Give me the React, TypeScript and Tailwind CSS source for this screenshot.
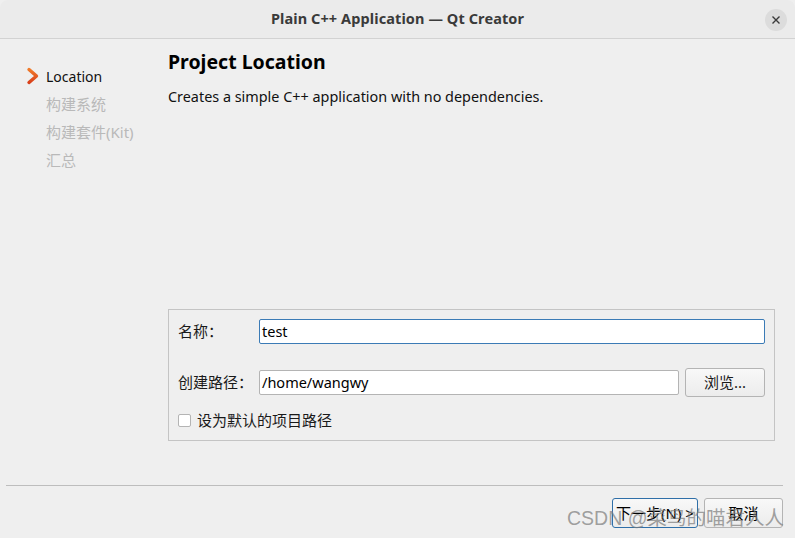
import React from "react";

const F = { fontFamily: '"Noto Sans", "Noto Sans CJK SC", sans-serif' };

export default function App() {
  return (
    <div
      className="relative w-[795px] h-[538px] overflow-hidden bg-[#efefef] flex flex-col text-[#1a1a1a]"
      style={F}
    >
      {/* Title bar */}
      <div className="h-[39px] shrink-0 bg-[#ebebeb] border-b border-[#d2d2d2] rounded-t-[8px] flex items-center justify-center relative">
        <span className="text-[14.5px] font-bold text-[#3a3a3a] tracking-[0.1px] pl-[-4px]">
          Plain C++ Application — Qt Creator
        </span>
        <div className="absolute right-[8px] top-[9px] w-[22px] h-[22px] rounded-full bg-[#dcdcdc] flex items-center justify-center">
          <svg width="10" height="10" viewBox="0 0 10 10">
            <path d="M1.5 1.5 L8.5 8.5 M8.5 1.5 L1.5 8.5" stroke="#3a3a3a" strokeWidth="1.4" />
          </svg>
        </div>
      </div>

      {/* Body */}
      <div className="flex flex-1">
        {/* Sidebar */}
        <div className="w-[168px] shrink-0 pt-[27px] flex flex-col">
          <div className="flex items-center h-[20px]">
            <svg width="46" height="20" viewBox="0 0 46 20" className="shrink-0">
              <defs>
                <linearGradient id="chev" x1="0" y1="0" x2="0" y2="1">
                  <stop offset="0" stopColor="#f07a2a" />
                  <stop offset="1" stopColor="#d9401a" />
                </linearGradient>
              </defs>
              <path d="M29 3.5 L36.5 10 L29 16.5" stroke="url(#chev)" strokeWidth="3.4" fill="none" strokeLinejoin="round" strokeLinecap="round" />
            </svg>
            <span className="text-[14px] text-[#111]">Location</span>
          </div>
          <div className="pl-[46px] mt-[8px] h-[20px] text-[15px] text-[#b9b9b9] leading-[20px]">构建系统</div>
          <div className="pl-[46px] mt-[8px] h-[20px] text-[15px] text-[#b9b9b9] leading-[20px]">构建套件(Kit)</div>
          <div className="pl-[46px] mt-[8px] h-[20px] text-[15px] text-[#b9b9b9] leading-[20px]">汇总</div>
        </div>

        {/* Main */}
        <div className="flex-1 flex flex-col pt-[10px] pr-[20px]">
          <div className="text-[19.5px] font-bold leading-[26px] text-black">Project Location</div>
          <div className="mt-[12px] text-[14.4px] leading-[20px] text-[#111]">
            Creates a simple C++ application with no dependencies.
          </div>

          <div className="mt-[202px] w-[607px] h-[132px] border border-[#c4c4c4] flex flex-col pl-[9px] pr-[9px] pt-[9px]">
            <div className="flex items-center h-[25px]">
              <span className="w-[81px] text-[15px]">名称：</span>
              <div className="flex-1 h-[25px] bg-white border border-[#3b7bb6] rounded-[2px] flex items-center pl-[2px] text-[14.5px] text-black">
                test
              </div>
            </div>
            <div className="flex items-center h-[29px] mt-[24px]">
              <span className="w-[81px] text-[15px]">创建路径：</span>
              <div className="w-[420px] h-[25px] bg-white border border-[#b4b4b4] rounded-[2px] flex items-center pl-[2px] text-[14.5px] text-black">
                /home/wangwy
              </div>
              <div className="ml-[6px] flex-1 h-[29px] rounded-[3px] border border-[#b4b4b4] bg-gradient-to-b from-[#f8f8f8] to-[#ececec] flex items-center justify-center text-[15px]">
                浏览...
              </div>
            </div>
            <div className="flex items-center mt-[13px] h-[20px]">
              <div className="w-[13px] h-[13px] bg-white border border-[#b4b4b4] rounded-[2px]" />
              <span className="ml-[6px] text-[15px]">设为默认的项目路径</span>
            </div>
          </div>
        </div>
      </div>

      {/* Footer */}
      <div className="h-[53px] shrink-0 flex flex-col">
        <div className="mx-[6px] mr-[12px] h-[1px] bg-[#bdbdbd]" />
        <div className="flex justify-end pr-[12px] mt-[12px] gap-[6px]">
          <div className="w-[86px] h-[30px] rounded-[3px] border border-[#2f6fa8] bg-gradient-to-b from-[#f8f8f8] to-[#ececec] flex items-center justify-center text-[15px] text-black">
            下一步(N) &gt;
          </div>
          <div className="w-[79px] h-[30px] rounded-[3px] border border-[#b4b4b4] bg-gradient-to-b from-[#f8f8f8] to-[#ececec] flex items-center justify-center text-[15px] text-black">
            取消
          </div>
        </div>
      </div>

      {/* Watermark */}
      <div
        className="absolute left-[567px] top-[505px] text-[19.5px] leading-[26px] text-[#7a7a7a]/70 whitespace-nowrap pointer-events-none"
        style={{ fontFamily: '"Liberation Sans", "Noto Sans CJK SC", sans-serif' }}
      >
        CSDN @菜鸟的喵君人人
      </div>
    </div>
  );
}
